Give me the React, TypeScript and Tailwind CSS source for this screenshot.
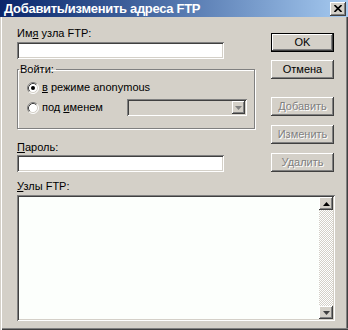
import React from "react";

const raised =
  "shadow-[inset_-1px_-1px_#404040,inset_1px_1px_#ffffff,inset_-2px_-2px_#808080,inset_2px_2px_#d4d0c8]";
const sunken =
  "shadow-[inset_1px_1px_#808080,inset_-1px_-1px_#ffffff,inset_2px_2px_#404040,inset_-2px_-2px_#d4d0c8]";
const font = "font-['Liberation_Sans',Arial,sans-serif]";

function Radio({ checked }: { checked?: boolean }) {
  return (
    <svg width="12" height="12" viewBox="0 0 12 12" className="shrink-0">
      <circle cx="6" cy="6" r="5" fill="#ffffff" />
      <path d="M2.11 9.89 A5.5 5.5 0 0 1 9.89 2.11" stroke="#808080" fill="none" />
      <path d="M9.89 2.11 A5.5 5.5 0 0 1 2.11 9.89" stroke="#ffffff" fill="none" />
      <path d="M2.82 9.18 A4.5 4.5 0 0 1 9.18 2.82" stroke="#404040" fill="none" />
      <path d="M9.18 2.82 A4.5 4.5 0 0 1 2.82 9.18" stroke="#d4d0c8" fill="none" />
      {checked && <circle cx="6" cy="6" r="2" fill="#000000" />}
    </svg>
  );
}

function Arrow({ down, color = "#000000" }: { down?: boolean; color?: string }) {
  return (
    <svg width="7" height="4" viewBox="0 0 7 4">
      {down ? (
        <path d="M0 0 H7 L3.5 4 Z" fill={color} />
      ) : (
        <path d="M0 4 H7 L3.5 0 Z" fill={color} />
      )}
    </svg>
  );
}

function Button({
  label,
  isDefault,
  disabled,
  className = "",
}: {
  label: React.ReactNode;
  isDefault?: boolean;
  disabled?: boolean;
  className?: string;
}) {
  const text = disabled
    ? "text-[#808080] [text-shadow:1px_1px_0_#ffffff]"
    : "text-black";
  if (isDefault) {
    return (
      <div className={`h-[19px] w-[63px] border border-black ${className}`}>
        <div
          className={`flex h-full w-full items-center justify-center bg-[#d4d0c8] text-[11px] ${text} ${raised}`}
        >
          {label}
        </div>
      </div>
    );
  }
  return (
    <div
      className={`flex h-[19px] w-[63px] items-center justify-center bg-[#d4d0c8] text-[11px] ${text} ${raised} ${className}`}
    >
      {label}
    </div>
  );
}

export default function App() {
  return (
    <div
      className={`flex h-[330px] w-[348px] flex-col overflow-hidden bg-[#d4d0c8] text-[11px] leading-[13px] text-black ${font}`}
    >
      {/* title bar */}
      <div className="flex h-[17px] shrink-0 items-center bg-linear-to-r from-[#0a246a] to-[#a6caf0] pl-[4px] pr-[2px]">
        <span className="text-[13px] font-bold leading-[17px] tracking-[-0.3px] text-white">
          Добавить/изменить адреса FTP
        </span>
        <div
          className={`ml-auto flex h-[14px] w-[16px] items-center justify-center bg-[#d4d0c8] ${raised}`}
        >
          <svg width="8" height="7" viewBox="0 0 8 7">
            <path d="M0.5 0 L7.5 7 M7.5 0 L0.5 7" stroke="#000000" strokeWidth="1.6" />
          </svg>
        </div>
      </div>

      {/* body */}
      <div className="flex flex-1 flex-col pl-[17px] shadow-[inset_1px_0_#d4d0c8,inset_2px_0_#ffffff,inset_0_-1px_#404040,inset_0_-2px_#808080,inset_-1px_0_#404040,inset_-2px_0_#808080]">
        <div className="flex">
          {/* left column */}
          <div className="flex w-[238px] flex-col pt-[10px]">
            <div>
              Им<u>я</u> узла FTP:
            </div>
            <div className={`mt-[2px] h-[17px] w-[207px] bg-white ${sunken}`} />

            <fieldset className="mt-[4px] h-[66px] border border-[#808080] shadow-[1px_1px_0_#ffffff,inset_1px_1px_0_#ffffff]">
              <legend className="ml-[1px] pl-[1px] pr-[2px]">Войти:</legend>
              <div className="flex flex-col pl-[9px] pr-[7px] pt-[5px]">
                <div className="flex items-center gap-[3px]">
                  <Radio checked />
                  <span>
                    <u>в</u> режиме anonymous
                  </span>
                </div>
                <div className="mt-[5px] flex items-center">
                  <Radio />
                  <span className="ml-[3px]">
                    под <u>и</u>менем
                  </span>
                  <div
                    className={`ml-auto flex h-[17px] w-[120px] items-center justify-end bg-[#d4d0c8] pr-[2px] ${sunken}`}
                  >
                    <div
                      className={`flex h-[13px] w-[13px] items-center justify-center bg-[#d4d0c8] ${raised}`}
                    >
                      <Arrow down color="#808080" />
                    </div>
                  </div>
                </div>
              </div>
            </fieldset>

            <div className="mt-[12px]">
              <u>П</u>ароль:
            </div>
            <div className={`mt-[1px] h-[17px] w-[207px] bg-white ${sunken}`} />
          </div>

          {/* buttons */}
          <div className="ml-[16px] flex flex-col pt-[16px]">
            <Button label="OK" isDefault />
            <Button label="Отмена" className="mt-[8px]" />
            <Button label="Добавить" disabled className="mt-[18px]" />
            <Button label="Изменить" disabled className="mt-[9px]" />
            <Button label="Удалить" disabled className="mt-[9px]" />
          </div>
        </div>

        <div className="mt-[8px]">
          <u>У</u>злы FTP:
        </div>
        <div
          className={`mt-[2px] flex h-[126px] w-[318px] justify-end bg-[#fcfffc] py-[2px] pr-[2px] ${sunken}`}
        >
          <div className="flex w-[14px] flex-col">
            <div
              className={`flex h-[13px] w-[14px] items-center justify-center bg-[#d4d0c8] ${raised}`}
            >
              <Arrow />
            </div>
            <div className="flex-1 bg-[repeating-conic-gradient(#ffffff_0_25%,#d4d0c8_0_50%)] bg-[length:2px_2px]" />
            <div
              className={`flex h-[13px] w-[14px] items-center justify-center bg-[#d4d0c8] ${raised}`}
            >
              <Arrow down color="#404040" />
            </div>
          </div>
        </div>
      </div>
    </div>
  );
}
